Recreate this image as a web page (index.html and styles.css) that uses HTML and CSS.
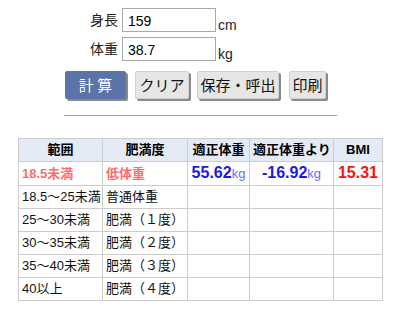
FILE: index.html
```html
<!DOCTYPE html>
<html lang="ja">
<head>
<meta charset="utf-8">
<link rel="stylesheet" href="styles.css">
</head>
<body>
<div class="page">
  <div class="form">
    <div class="row">
      <label class="lbl">身長</label>
      <input class="inp" type="text" value="159">
      <span class="unit">cm</span>
    </div>
    <div class="row">
      <label class="lbl">体重</label>
      <input class="inp" type="text" value="38.7">
      <span class="unit">kg</span>
    </div>
  </div>
  <div class="buttons">
    <button class="btn btn-calc">計 算</button>
    <button class="btn btn-clear">クリア</button>
    <button class="btn btn-save">保存・呼出</button>
    <button class="btn btn-print">印刷</button>
  </div>
  <div class="rule"></div>
  <table class="tbl">
    <colgroup>
      <col class="c1"><col class="c2"><col class="c3"><col class="c4"><col class="c5">
    </colgroup>
    <thead>
      <tr><th>範囲</th><th>肥満度</th><th>適正体重</th><th>適正体重より</th><th>BMI</th></tr>
    </thead>
    <tbody>
      <tr class="hit">
        <td class="hl">18.5未満</td><td class="hl">低体重</td>
        <td class="num"><b class="val">55.62</b><span class="kg">kg</span></td>
        <td class="num"><b class="val">-16.92</b><span class="kg">kg</span></td>
        <td class="num"><b class="bmi">15.31</b></td>
      </tr>
      <tr><td>18.5～25未満</td><td>普通体重</td><td></td><td></td><td></td></tr>
      <tr><td>25～30未満</td><td>肥満（１度）</td><td></td><td></td><td></td></tr>
      <tr><td>30～35未満</td><td>肥満（２度）</td><td></td><td></td><td></td></tr>
      <tr><td>35～40未満</td><td>肥満（３度）</td><td></td><td></td><td></td></tr>
      <tr><td>40以上</td><td>肥満（４度）</td><td></td><td></td><td></td></tr>
    </tbody>
  </table>
</div>
</body>
</html>
```
FILE: styles.css
```css
html, body {
  margin: 0;
  padding: 0;
  background: #fff;
}
body {
  font-family: "Liberation Sans", "Noto Sans CJK JP", sans-serif;
  color: #000;
}
.page {
  width: 397px;
  padding-top: 8px;
}
.form {
  display: flex;
  flex-direction: column;
  gap: 5px;
  padding-left: 88px;
}
.row {
  display: flex;
  align-items: flex-end;
  height: 24px;
}
.lbl {
  width: 30px;
  font-size: 14px;
  line-height: 20px;
  align-self: center;
  text-align: right;
  padding-right: 4px;
  color: #222;
}
.inp {
  box-sizing: border-box;
  width: 94px;
  height: 24px;
  margin: 0;
  border: 1px solid #a9a9a9;
  padding: 1px 5px 0;
  font-family: "Liberation Sans", sans-serif;
  font-size: 14px;
  color: #000;
  background: #fff;
  outline: none;
}
.unit {
  font-size: 14px;
  line-height: 16px;
  padding-left: 2px;
  color: #222;
  margin-bottom: -1px;
}
.buttons {
  display: flex;
  margin-top: 10px;
  padding-left: 65px;
  height: 30px;
}
.btn {
  box-sizing: border-box;
  height: 28px;
  margin: 0 10px 0 0;
  padding: 0;
  border: 1px solid #d0d0d0;
  background: #e6e6e6;
  box-shadow: 2px 2px 0 #8a8a8a;
  border-radius: 2px;
  font-family: "Noto Sans CJK JP", sans-serif;
  font-size: 15px;
  line-height: 24px;
  color: #111;
}
.btn-calc {
  width: 61px;
  background: #5a73a8;
  border-color: #5a73a8;
  color: #fff;
  margin-right: 9px;
}
.btn-clear { width: 54px; margin-right: 8px; }
.btn-save { width: 82px; margin-right: 10px; }
.btn-print { width: 37px; }
.rule {
  margin: 14px 0 0 64px;
  width: 273px;
  height: 1px;
  background: #a0a0a0;
}
.tbl {
  margin: 22px 0 0 18px;
  width: 365px;
  border-collapse: collapse;
  table-layout: fixed;
  font-size: 13px;
  border: 1px solid #cccccc;
}
.c1 { width: 84px; }
.c2 { width: 85px; }
.c3 { width: 62px; }
.c4 { width: 84px; }
.c5 { width: 49px; }
.tbl th, .tbl td {
  border: 1px solid #cccccc;
  height: 22px;
  padding: 0 3px;
  line-height: 18px;
  white-space: nowrap;
  overflow: hidden;
}
.tbl th {
  background: #e4ebf7;
  font-weight: bold;
  text-align: center;
  color: #000;
}
.tbl td { text-align: left; color: #111; }
.tbl tr.hit td { height: 23px; }
.tbl td.hl {
  color: #ff6b6b;
  font-weight: bold;
}
.tbl td.num { text-align: center; padding: 0; }
.val {
  font-size: 16px;
  color: #1a1ae6;
}
.kg {
  font-size: 13px;
  color: #6a6aff;
}
.bmi {
  font-size: 16px;
  color: #ff1010;
}
```
